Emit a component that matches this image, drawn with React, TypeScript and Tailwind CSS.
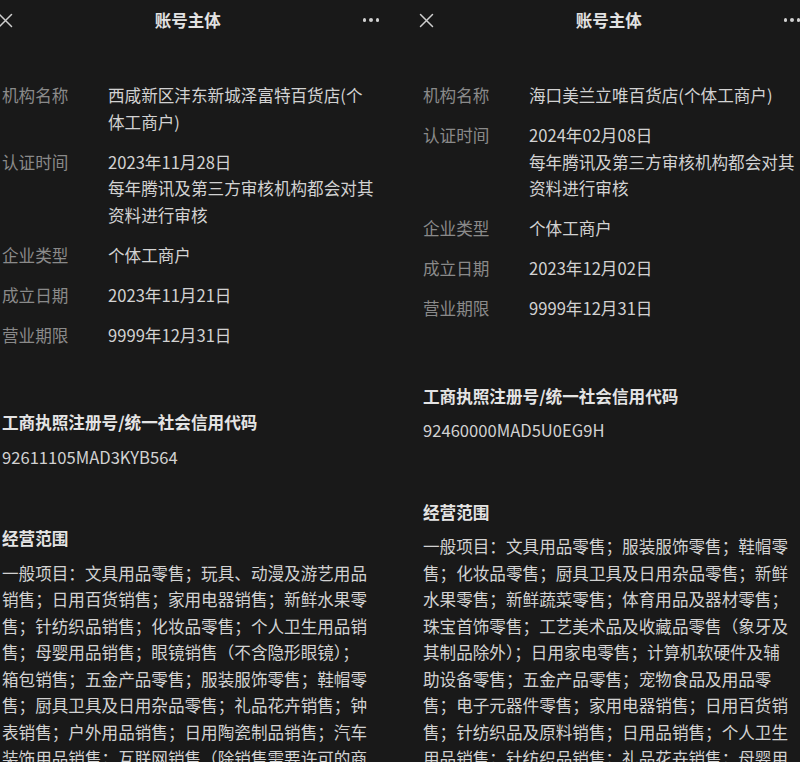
import React from "react";

type Row = { label: string; lines: string[] };

type PanelData = {
  rows: Row[];
  code: string;
  scope: string[];
};

const LEFT: PanelData = {
  rows: [
    { label: "机构名称", lines: ["西咸新区沣东新城泽富特百货店(个", "体工商户)"] },
    {
      label: "认证时间",
      lines: ["2023年11月28日", "每年腾讯及第三方审核机构都会对其", "资料进行审核"],
    },
    { label: "企业类型", lines: ["个体工商户"] },
    { label: "成立日期", lines: ["2023年11月21日"] },
    { label: "营业期限", lines: ["9999年12月31日"] },
  ],
  code: "92611105MAD3KYB564",
  scope: [
    "一般项目：文具用品零售；玩具、动漫及游艺用品",
    "销售；日用百货销售；家用电器销售；新鲜水果零",
    "售；针纺织品销售；化妆品零售；个人卫生用品销",
    "售；母婴用品销售；眼镜销售（不含隐形眼镜）；",
    "箱包销售；五金产品零售；服装服饰零售；鞋帽零",
    "售；厨具卫具及日用杂品零售；礼品花卉销售；钟",
    "表销售；户外用品销售；日用陶瓷制品销售；汽车",
    "装饰用品销售；互联网销售（除销售需要许可的商",
    "品）；珠宝首饰零售。",
  ],
};

const RIGHT: PanelData = {
  rows: [
    { label: "机构名称", lines: ["海口美兰立唯百货店(个体工商户)"] },
    {
      label: "认证时间",
      lines: ["2024年02月08日", "每年腾讯及第三方审核机构都会对其", "资料进行审核"],
    },
    { label: "企业类型", lines: ["个体工商户"] },
    { label: "成立日期", lines: ["2023年12月02日"] },
    { label: "营业期限", lines: ["9999年12月31日"] },
  ],
  code: "92460000MAD5U0EG9H",
  scope: [
    "一般项目：文具用品零售；服装服饰零售；鞋帽零",
    "售；化妆品零售；厨具卫具及日用杂品零售；新鲜",
    "水果零售；新鲜蔬菜零售；体育用品及器材零售；",
    "珠宝首饰零售；工艺美术品及收藏品零售（象牙及",
    "其制品除外）；日用家电零售；计算机软硬件及辅",
    "助设备零售；五金产品零售；宠物食品及用品零",
    "售；电子元器件零售；家用电器销售；日用百货销",
    "售；针纺织品及原料销售；日用品销售；个人卫生",
    "用品销售；针纺织品销售；礼品花卉销售；母婴用",
    "品销售。",
  ],
};

function CloseIcon() {
  return (
    <svg width="15" height="15" viewBox="0 0 15 15" fill="none">
      <path d="M1.5 1.5L13.5 13.5M13.5 1.5L1.5 13.5" stroke="#cfcfcf" strokeWidth="1.5" strokeLinecap="round" />
    </svg>
  );
}

function Panel({ data, className }: { data: PanelData; className?: string }) {
  return (
    <div className={`w-[421px] shrink-0 ${className ?? ""}`}>
      <div className="flex h-[40px] items-center justify-between pl-[17px] pr-[23px]">
        <CloseIcon />
        <div className="text-[16.5px] font-bold text-[#e2e2e2]">账号主体</div>
        <div className="flex gap-[3px]">
          <span className="h-[3.5px] w-[3.5px] rounded-full bg-[#d0d0d0]" />
          <span className="h-[3.5px] w-[3.5px] rounded-full bg-[#d0d0d0]" />
          <span className="h-[3.5px] w-[3.5px] rounded-full bg-[#d0d0d0]" />
        </div>
      </div>

      <div className="pl-[21px] pt-[42px] text-[16.6px] leading-[26.5px]">
        <div className="flex flex-col gap-[13.5px]">
          {data.rows.map((row) => (
            <div key={row.label} className="flex">
              <div className="w-[106px] shrink-0 text-[#8a8a8a]">{row.label}</div>
              <div className="text-[#d2d2d2]">
                {row.lines.map((l) => (
                  <div key={l} className="whitespace-nowrap">
                    {l}
                  </div>
                ))}
              </div>
            </div>
          ))}
        </div>

        <div className="mt-[61px] font-bold text-[#e4e4e4]">工商执照注册号/统一社会信用代码</div>
        <div className="mt-[8px] text-[#d2d2d2]">{data.code}</div>

        <div className="mt-[55px] font-bold text-[#e4e4e4]">经营范围</div>
        <div className="mt-[8px] text-[#d2d2d2]">
          {data.scope.map((l) => (
            <div key={l} className="whitespace-nowrap">
              {l}
            </div>
          ))}
        </div>
      </div>
    </div>
  );
}

export default function App() {
  return (
    <div
      className="flex h-[762px] w-[800px] overflow-hidden bg-[#191919]"
      style={{ fontFamily: '"Noto Sans CJK SC", "Noto Sans", sans-serif' }}
    >
      <Panel data={LEFT} className="-ml-[19px]" />
      <Panel data={RIGHT} />
    </div>
  );
}
